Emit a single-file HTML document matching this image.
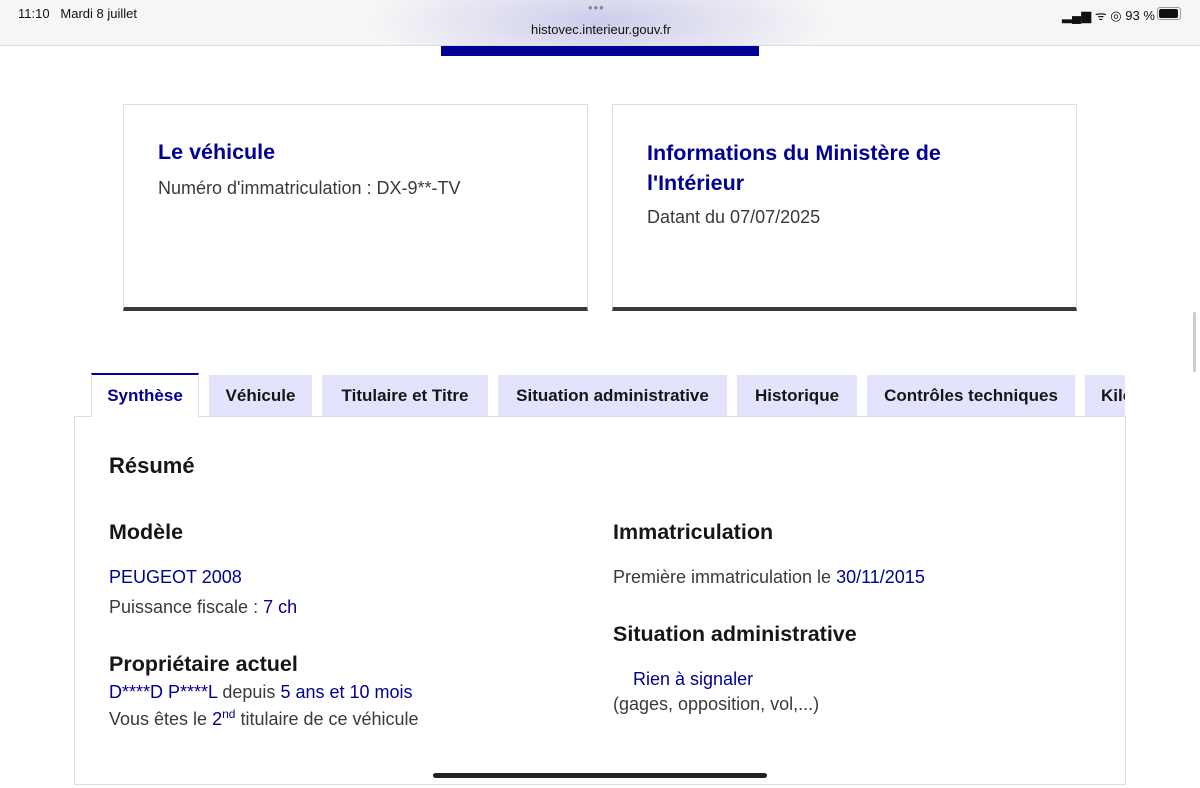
<!DOCTYPE html>
<html><head><meta charset="utf-8"><style>
body{margin:0;width:1200px;height:788px;overflow:hidden;background:#fff;font-family:"Liberation Sans",sans-serif;position:relative;color:#3a3a3a}
.a{position:absolute;white-space:nowrap}
.bar{position:absolute;left:0;top:0;width:1200px;height:45px;background:#f6f6f6;border-bottom:1px solid #ddd}
.card{position:absolute;top:104px;height:202px;border:1px solid #ddd;border-bottom:4px solid #3a3a3a;background:#fff}
.t{color:#000091;font-weight:bold;font-size:21.5px}
.tab{position:absolute;top:375px;height:41px;background:#e3e3fd;color:#161616;font-weight:bold;font-size:17px;line-height:41px;text-align:center}
.b{color:#000091}
h3{margin:0;font-size:21.5px;color:#161616;position:absolute;white-space:nowrap}
.p{font-size:18px;position:absolute;white-space:nowrap}
</style></head><body>
<div class="bar"></div>
<div class="a" style="left:0;top:0;width:1200px;height:45px;background:radial-gradient(ellipse 230px 60px at 600px 22px,rgba(200,200,235,.9),rgba(246,246,246,0))"></div>
<div class="a" style="left:18px;top:6px;font-size:13px;color:#111">11:10&nbsp;&nbsp; Mardi 8 juillet</div>
<div class="a" style="left:588px;top:0px;font-size:13px;color:#888;letter-spacing:1px">•••</div>
<div class="a" style="left:531px;top:22px;font-size:13px;color:#111">histovec.interieur.gouv.fr</div>
<div class="a" style="left:1062px;top:6px;font-size:13px;color:#111">▂▄▆ ᯤ ◎ 93 %</div>
<div class="a" style="left:1157px;top:7px;width:22px;height:11px;border:1px solid #999;border-radius:3px"><div style="margin:1px;width:19px;height:9px;background:#111;border-radius:2px"></div></div>
<div class="a" style="left:441px;top:46px;width:318px;height:10px;background:#000091"></div>
<div class="a" style="left:1193px;top:312px;width:3px;height:60px;background:#ccc;border-radius:2px"></div>

<div class="card" style="left:123px;width:463px">
<div class="a t" style="left:34px;top:35px">Le véhicule</div>
<div class="a" style="left:34px;top:73px;font-size:18px">Numéro d'immatriculation : DX-9**-TV</div>
</div>
<div class="card" style="left:612px;width:463px">
<div class="a t" style="left:34px;top:33px;line-height:30px">Informations du Ministère de<br>l'Intérieur</div>
<div class="a" style="left:34px;top:102px;font-size:18px">Datant du 07/07/2025</div>
</div>

<div class="a" style="left:74px;top:416px;width:1050px;height:367px;border:1px solid #ddd;border-top:1px solid #ddd"></div>
<div class="tab" style="left:91px;width:108px;background:#fff;color:#000091;border-top:2px solid #000091;top:373px;height:44px;border-left:1px solid #ddd;border-right:1px solid #ddd;box-sizing:border-box;line-height:42px">Synthèse</div>
<div class="tab" style="left:209px;width:103px">Véhicule</div>
<div class="tab" style="left:322px;width:166px">Titulaire et Titre</div>
<div class="tab" style="left:498px;width:229px">Situation administrative</div>
<div class="tab" style="left:737px;width:120px">Historique</div>
<div class="tab" style="left:867px;width:208px">Contrôles techniques</div>
<div class="tab" style="left:1085px;width:40px;overflow:hidden;text-align:left;text-indent:16px">Kilo</div>

<h3 style="left:109px;top:453px;font-size:22px">Résumé</h3>
<h3 style="left:109px;top:520px">Modèle</h3>
<div class="p b" style="left:109px;top:567px">PEUGEOT 2008</div>
<div class="p" style="left:109px;top:597px">Puissance fiscale : <span class="b">7 ch</span></div>
<h3 style="left:109px;top:652px">Propriétaire actuel</h3>
<div class="p" style="left:109px;top:682px"><span class="b">D****D P****L</span> depuis <span class="b">5 ans et 10 mois</span></div>
<div class="p" style="left:109px;top:707px">Vous êtes le <span class="b">2<sup style="font-size:12px">nd</sup></span> titulaire de ce véhicule</div>
<h3 style="left:613px;top:520px">Immatriculation</h3>
<div class="p" style="left:613px;top:567px">Première immatriculation le <span class="b">30/11/2015</span></div>
<h3 style="left:613px;top:622px">Situation administrative</h3>
<div class="p b" style="left:633px;top:669px">Rien à signaler</div>
<div class="p" style="left:613px;top:694px">(gages, opposition, vol,...)</div>
<div class="a" style="left:433px;top:773px;width:334px;height:5px;background:#222;border-radius:3px"></div>
</body></html>
